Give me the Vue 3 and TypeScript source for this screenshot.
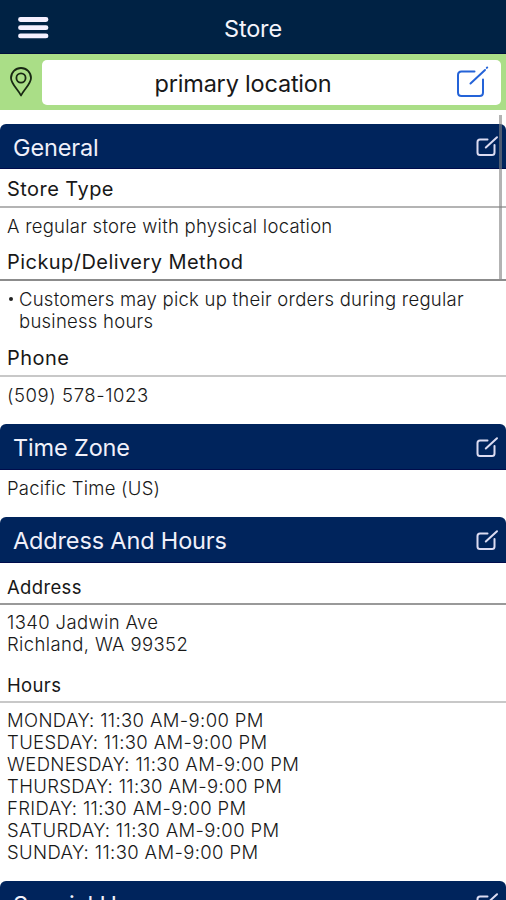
<script setup lang="ts">
interface Block {
  label?: string
  kind: string
  lines: string[]
  bullet?: boolean
}
interface Section {
  id: string
  title: string
  blocks: Block[]
}

const sections: Section[] = [
  {
    id: 'general',
    title: 'General',
    blocks: [
      { kind: 'type', label: 'Store Type', lines: ['A regular store with physical location'] },
      {
        kind: 'method',
        label: 'Pickup/Delivery Method',
        bullet: true,
        lines: ['Customers may pick up their orders during regular', 'business hours'],
      },
      { kind: 'phone', label: 'Phone', lines: ['(509) 578-1023'] },
    ],
  },
  { id: 'zone', title: 'Time Zone', blocks: [{ kind: 'plain', lines: ['Pacific Time (US)'] }] },
  {
    id: 'location-hours',
    title: 'Address And Hours',
    blocks: [
      { kind: 'address', label: 'Address', lines: ['1340 Jadwin Ave', 'Richland, WA 99352'] },
      {
        kind: 'hours',
        label: 'Hours',
        lines: ['MONDAY', 'TUESDAY', 'WEDNESDAY', 'THURSDAY', 'FRIDAY', 'SATURDAY', 'SUNDAY'].map(
          (day) => `${day}: 11:30 AM-9:00 PM`,
        ),
      },
    ],
  },
  { id: 'special', title: 'Special Hours', blocks: [] },
]
</script>

<template>
  <div class="screen">
    <header class="topbar">
      <svg class="menu" viewBox="0 0 32 24" aria-hidden="true">
        <path d="M3.500 3.500H29M3.500 11.700H29M3.500 19.900H29" />
      </svg>
      <h1>Store</h1>
    </header>

    <div class="location">
      <svg class="pin" viewBox="0 0 24 32" aria-hidden="true">
        <path d="M12 29.500C9.500 24 2 18 2 12A10 10 0 0 1 22 12C22 18 14.500 24 12 29.500Z" />
        <circle cx="12" cy="12" r="4.600" />
      </svg>
      <div class="field">
        <span>primary location</span>
        <svg class="edit-large" viewBox="0 0 34 34" aria-hidden="true">
          <path d="M19.500 5.500H6.500Q3 5.500 3 9V26.500Q3 30 6.500 30H24.500Q28 30 28 26.500V13.500" />
          <path d="M15.500 17.500L30 4" />
          <path d="M31.800 1.900L32.200 1.500" />
        </svg>
      </div>
    </div>

    <main>
      <section v-for="s in sections" :key="s.id" :class="['section', s.id]">
        <div class="bar">
          <h2>{{ s.title }}</h2>
          <svg class="edit" viewBox="0 0 24 24" aria-hidden="true">
            <path d="M12.500 4.500H5Q2.500 4.500 2.500 7V17.500Q2.500 20 5 20H17Q19.500 20 19.500 17.500V10" />
            <path d="M10.800 12.500L22 2.200" />
          </svg>
        </div>
        <div v-for="b in s.blocks" :key="b.kind" :class="['block', b.kind]">
          <h3 v-if="b.label">{{ b.label }}</h3>
          <div class="body">
            <i v-if="b.bullet" class="dot"></i>
            <p v-for="line in b.lines" :key="line">{{ line }}</p>
          </div>
        </div>
      </section>
      <div class="scroll-thumb"></div>
    </main>
  </div>
</template>

<style>
body {
  margin: 0;
  background: #fff;
}
</style>

<style scoped>
.screen {
  height: 900px;
  overflow: hidden;
  font-family: Inter, 'Liberation Sans', sans-serif;
  color: #181818;
  background: #fff;
}
h1, h2, h3, p {
  margin: 0;
  font-weight: 400;
  white-space: nowrap;
}
svg {
  display: block;
  fill: none;
  stroke-linecap: round;
  stroke-linejoin: round;
}
.topbar {
  height: 54px;
  box-sizing: border-box;
  padding: 3px 0 0 17px;
  display: grid;
  grid-template-columns: 32px 1fr 49px;
  align-items: center;
  background: #002244;
  border-bottom: 1px solid #000f3a;
}
.menu {
  width: 32px;
  height: 24px;
  stroke: #f4f0ff;
  stroke-width: 4.800;
}
h1 {
  text-align: center;
  font-size: 23.500px;
  letter-spacing: -0.200px;
  color: #f4f4fb;
}
.location {
  height: 56px;
  box-sizing: border-box;
  display: flex;
  padding: 6px 5px 6px 9px;
  background: #aade87;
}
.pin {
  width: 24px;
  height: 32px;
  margin: 6px 9px 0 0;
  stroke: #182813;
  stroke-width: 1.800;
}
.field {
  flex: 1;
  height: 45px;
  display: grid;
  grid-template-columns: 1fr 34px;
  align-items: center;
  padding-right: 12px;
  border-radius: 5px;
  background: #fff;
}
.field span {
  padding: 2px 11px 0 0;
  text-align: center;
  font-size: 23.500px;
  letter-spacing: -0.200px;
}
.edit-large {
  width: 34px;
  height: 34px;
  stroke: #2463d8;
  stroke-width: 2;
}
main {
  position: relative;
  padding-top: 13.500px;
}
.bar {
  height: 45.500px;
  box-sizing: border-box;
  display: flex;
  justify-content: space-between;
  align-items: center;
  padding: 3px 7px 0 13px;
  color: #f0f0fa;
  background: #00245c;
  border-bottom: 1px solid #000c4c;
  border-radius: 6px 6px 0 0;
}
h2 {
  font-size: 23.500px;
  letter-spacing: -0.150px;
}
.edit {
  width: 24px;
  height: 24px;
  stroke: #dcdcf2;
  stroke-width: 2;
}
h3 {
  box-sizing: border-box;
  padding-left: 7px;
  font-size: 20px;
  letter-spacing: 0.450px;
  line-height: 40px;
  height: 39px;
  border-bottom: 2px solid #b4b4b4;
}
.body {
  padding: 7px 7px 0;
  font-size: 18.500px;
  letter-spacing: 0.250px;
  line-height: 22px;
}
.body p {
  font-weight: 300;
}
.block.type {
  height: 74px;
}
.block.method {
  height: 95px;
}
.method h3 {
  height: 38px;
  line-height: 39px;
  border-color: #8c8c8c;
}
.method .body {
  position: relative;
  padding-left: 19px;
}
.dot {
  position: absolute;
  left: 9px;
  top: 16px;
  width: 4px;
  height: 4px;
  border-radius: 50%;
  background: #222;
}
.block.phone {
  height: 86px;
}
.phone h3 {
  border-color: #c8c8c8;
}
.phone .body {
  letter-spacing: 0.580px;
}
.block.plain {
  height: 47.500px;
}
.block.address {
  height: 98px;
}
.block.hours {
  height: 220px;
}
.address h3, .hours h3 {
  height: 42px;
  line-height: 48px;
  font-size: 18.500px;
  letter-spacing: 0.350px;
}
.address h3 {
  border-color: #999;
}
.hours h3 {
  border-color: #c8c8c8;
}
.address .body, .hours .body {
  padding-top: 6px;
  letter-spacing: 0.370px;
}
.scroll-thumb {
  position: absolute;
  top: 5px;
  right: 4px;
  width: 3.500px;
  height: 164px;
  background: rgba(128, 128, 128, 0.600);
}
</style>
